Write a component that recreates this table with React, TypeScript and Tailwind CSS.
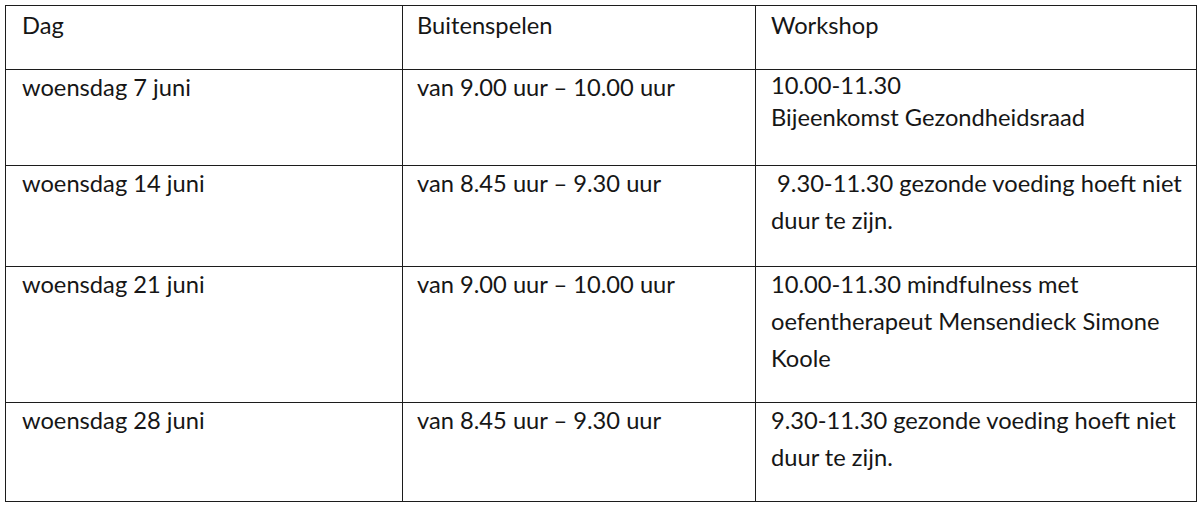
import React from "react";

type Row = {
  day: string;
  outside: string;
  workshop: string[];
  height: string;
  lead?: string;
};

// rijen met vaste hoogtes zoals in het rooster
const rows: Row[] = [
  {
    day: "woensdag 7 juni",
    outside: "van 9.00 uur – 10.00 uur",
    workshop: ["10.00-11.30", "Bijeenkomst Gezondheidsraad"],
    height: "h-[96px]",
    lead: "leading-[32px]",
  },
  {
    day: "woensdag 14 juni",
    outside: "van 8.45 uur – 9.30 uur",
    workshop: ["\u00a09.30-11.30 gezonde voeding hoeft niet", "duur te zijn."],
    height: "h-[101px]",
  },
  {
    day: "woensdag 21 juni",
    outside: "van 9.00 uur – 10.00 uur",
    workshop: ["10.00-11.30 mindfulness met", "oefentherapeut Mensendieck Simone", "Koole"],
    height: "h-[136px]",
  },
  {
    day: "woensdag 28 juni",
    outside: "van 8.45 uur – 9.30 uur",
    workshop: ["9.30-11.30 gezonde voeding hoeft niet", "duur te zijn."],
    height: "h-[99px]",
  },
];

const cell = "border border-[#1c1c1c] align-top p-0";

export default function App() {
  return (
    <div className="w-[1200px] h-[509px] bg-white pt-[5px] pl-[5px] font-['Lato','Liberation_Sans',sans-serif] text-[23.7px] text-[#161616]">
      <table className="border-collapse table-fixed w-[1191px]">
        <colgroup>
          <col className="w-[397px]" />
          <col className="w-[353px]" />
          <col className="w-[441px]" />
        </colgroup>
        <thead>
          <tr className="h-[64px]">
            <th className={`${cell} pl-[16px] text-left font-normal`}>
              <div className="leading-[37px] mt-[1px] whitespace-nowrap">Dag</div>
            </th>
            <th className={`${cell} pl-[14px] text-left font-normal`}>
              <div className="leading-[37px] mt-[1px] whitespace-nowrap">Buitenspelen</div>
            </th>
            <th className={`${cell} pl-[15px] text-left font-normal`}>
              <div className="leading-[37px] mt-[1px] whitespace-nowrap">Workshop</div>
            </th>
          </tr>
        </thead>
        <tbody>
          {rows.map((r) => (
            <tr key={r.day} className={r.height}>
              <td className={`${cell} pl-[16px]`}>
                <div className="leading-[37px] -mt-[1px] whitespace-nowrap">{r.day}</div>
              </td>
              <td className={`${cell} pl-[14px]`}>
                <div className="leading-[37px] -mt-[1px] whitespace-nowrap">{r.outside}</div>
              </td>
              <td className={`${cell} pl-[15px]`}>
                <div className={`${r.lead ?? "leading-[37px]"} -mt-[1px]`}>
                  {r.workshop.map((line) => (
                    <div key={line} className="whitespace-nowrap">
                      {line}
                    </div>
                  ))}
                </div>
              </td>
            </tr>
          ))}
        </tbody>
      </table>
    </div>
  );
}
